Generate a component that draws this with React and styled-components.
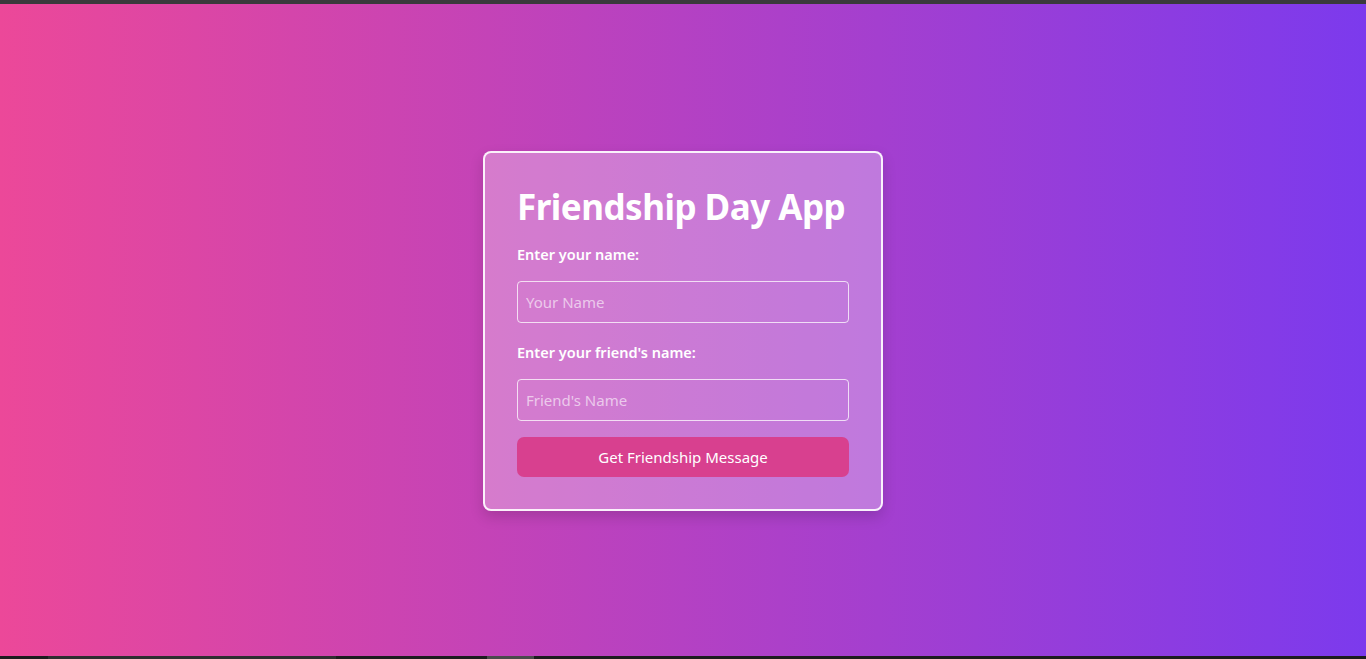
import React, { useState } from 'react';
import styled, { createGlobalStyle } from 'styled-components';

const GlobalStyle = createGlobalStyle`
  html, body {
    margin: 0;
    padding: 0;
    height: 100%;
  }
  body {
    font-family: "Noto Sans", "Open Sans", sans-serif;
    overflow: hidden;
  }
  #root {
    height: 100%;
  }
`;

const Page = styled.div`
  display: flex;
  flex-direction: column;
  height: 100vh;
  background: linear-gradient(to right, #ec4899, #7c3aed);
`;

const TopStrip = styled.div`
  height: 4px;
  flex-shrink: 0;
  background-color: #3a3a3c;
`;

const BottomStrip = styled.div`
  display: flex;
  height: 3px;
  flex-shrink: 0;
  background-color: #1c1c1e;
`;

const StripSegment = styled.div`
  margin-left: ${(p) => p.$offset}px;
  width: ${(p) => p.$width}px;
  background-color: ${(p) => p.$color};
`;

const Main = styled.main`
  flex: 1;
  display: flex;
  align-items: center;
  justify-content: center;
  padding-top: 2px;
`;

const Card = styled.div`
  width: 332px;
  padding: 32px;
  border: 2px solid rgba(255, 255, 255, 0.9);
  border-radius: 8px;
  background-color: rgba(255, 255, 255, 0.3);
  box-shadow: 0 6px 14px rgba(0, 0, 0, 0.15);
  display: flex;
  flex-direction: column;
`;

const Title = styled.h1`
  margin: 0 0 16px;
  font-size: 35px;
  line-height: 43px;
  font-weight: 700;
  color: #fff;
  white-space: nowrap;
  letter-spacing: -0.5px;
`;

const Label = styled.label`
  display: block;
  font-size: 14.5px;
  line-height: 20px;
  font-weight: 600;
  color: #fff;
  margin-bottom: 17px;
`;

const Input = styled.input`
  box-sizing: border-box;
  width: 100%;
  height: 42px;
  padding: 0 8px;
  margin-bottom: ${(p) => p.$gap}px;
  border: 1px solid rgba(255, 255, 255, 0.75);
  border-radius: 4px;
  background: transparent;
  font-family: inherit;
  font-size: 15px;
  color: #fff;
  outline: none;

  &::placeholder {
    color: rgba(255, 255, 255, 0.6);
  }
`;

const Button = styled.button`
  height: 40px;
  width: 100%;
  border: none;
  border-radius: 7px;
  background-color: #d8408f;
  color: #fff;
  font-family: inherit;
  font-size: 15px;
  cursor: pointer;
`;

const App = () => {
  const [name, setName] = useState('');
  const [friend, setFriend] = useState('');

  return (
    <>
      <GlobalStyle />
      <Page>
        <TopStrip />
        <Main>
          <Card>
            <Title>Friendship Day App</Title>
            <Label htmlFor="name">Enter your name:</Label>
            <Input
              id="name"
              $gap={19}
              placeholder="Your Name"
              value={name}
              onChange={(e) => setName(e.target.value)}
            />
            <Label htmlFor="friend">Enter your friend's name:</Label>
            <Input
              id="friend"
              $gap={16}
              placeholder="Friend's Name"
              value={friend}
              onChange={(e) => setFriend(e.target.value)}
            />
            <Button type="button">Get Friendship Message</Button>
          </Card>
        </Main>
        <BottomStrip>
          <StripSegment $offset={48} $width={288} $color="#2e2e30" />
          <StripSegment $offset={151} $width={47} $color="#4a4a4c" />
        </BottomStrip>
      </Page>
    </>
  );
};

export default App;
